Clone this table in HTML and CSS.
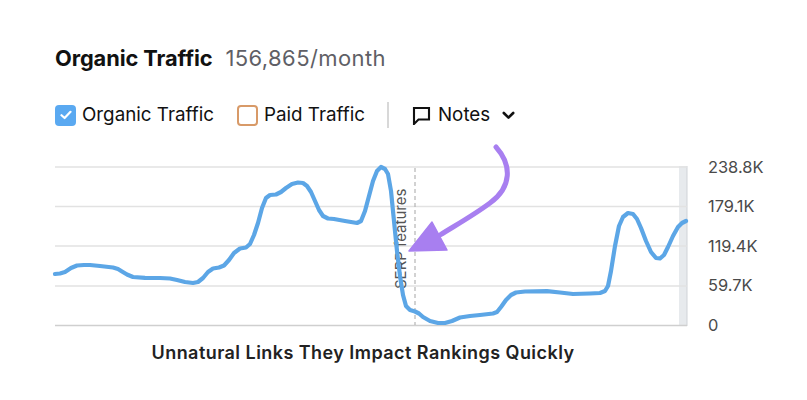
FILE: index.html
```html
<!DOCTYPE html>
<html>
<head>
<meta charset="utf-8">
<link rel="stylesheet" href="styles.css">
</head>
<body>
<div class="page">
  <div class="head">
    <span class="h-title">Organic Traffic</span>
    <span class="h-val">156,865/month</span>
  </div>
  <div class="legend">
    <span class="lg">
      <span class="cb cb-on"><svg width="12" height="10" viewBox="0 0 12 10"><path d="M1.5 5.2 L4.6 8 L10.5 1.8" fill="none" stroke="#fff" stroke-width="2.2" stroke-linecap="round" stroke-linejoin="round"/></svg></span>
      <span class="lg-text">Organic Traffic</span>
    </span>
    <span class="lg lg-paid">
      <span class="cb cb-off"></span>
      <span class="lg-text">Paid Traffic</span>
    </span>
    <span class="sep"></span>
    <span class="notes">
      <svg class="bubble" width="19" height="19" viewBox="0 0 19 19"><path d="M2 2 H17 V13.5 H6.5 L2 18 Z" fill="none" stroke="#111" stroke-width="2.1" stroke-linejoin="miter"/></svg>
      <span class="lg-text">Notes</span>
      <svg class="chev" width="13" height="9" viewBox="0 0 13 9"><path d="M1.8 2 L6.5 6.6 L11.2 2" fill="none" stroke="#111" stroke-width="2.6" stroke-linecap="round" stroke-linejoin="round"/></svg>
    </span>
  </div>
  <svg class="chart" width="807" height="195" viewBox="0 140 807 195">
    <rect x="679" y="165" width="8" height="160" fill="#e7eaed"/>
    <line x1="687" y1="165" x2="687" y2="325" stroke="#cfd3d7" stroke-width="1"/>
    <g stroke="#e2e2e2" stroke-width="1.3">
      <line x1="55" y1="166" x2="687" y2="166"/>
      <line x1="55" y1="205.5" x2="687" y2="205.5"/>
      <line x1="55" y1="245" x2="687" y2="245"/>
      <line x1="55" y1="285" x2="687" y2="285"/>
    </g>
    <line x1="55" y1="324.5" x2="687" y2="324.5" stroke="#cfcfcf" stroke-width="1.5"/>
    <line x1="415" y1="167" x2="415" y2="324" stroke="#b5b5b5" stroke-width="1.2" stroke-dasharray="4 3"/>
    <text class="serp" transform="translate(406,288) rotate(-90)">SERP features</text>
    <polyline fill="none" stroke="#5ca6e6" stroke-width="4.2" stroke-linejoin="round" stroke-linecap="round"
      points="55,273 60,272.5 65,271 71,267 77,264.5 84,264 90,264 100,265 113,266.5 118,268 122,270.5 127,273.5 133,276 145,276.8 160,277 170,277.5 177,279 185,281 193,282 198,281 203,277 208,271 213,267.5 219,266.5 224,264.5 229,259 234,252 240,247.5 246,246.5 250,243 254,234 258,222 262,207 266,197 270,194 276,193.5 281,191 286,187 292,183 298,181.5 303,182 307,185 311,191 315,200 319,209 323,215 328,217.5 334,218 345,220 357,222 361,220 365,210 369,195 373,180 377,170 381,166 385,168 388,173 391,190 394,220 397,250 400,275 403,294 406,305 410,309 415,310.5 419,312.5 423,316 430,320 438,322 445,322 452,320 460,316.5 470,315 480,314 493,312.5 497,311 501,306 506,299 511,294 516,291.5 525,290.5 547,290.2 560,291.5 573,293 590,292.5 600,292 605,290 608,285 611,270 615,245 619,225 623,216 628,212 633,213 637,218 641,227 646,240 651,251 656,257 660,257.5 664,254 668,246 673,235 678,226 682,222 686,220"/>
    <path d="M496 146 C512 164 512 186 490 202 C474 214 456 224 440 234" fill="none" stroke="#a87ff0" stroke-width="5" stroke-linecap="round"/>
    <polygon points="409,250 432,221 447,249" fill="#a87ff0" stroke="#a87ff0" stroke-width="1.5" stroke-linejoin="round"/>
    <g class="ylab">
      <text x="708" y="171.5">238.8K</text>
      <text x="708" y="211">179.1K</text>
      <text x="708" y="250.5">119.4K</text>
      <text x="708" y="290">59.7K</text>
      <text x="708" y="330">0</text>
    </g>
  </svg>
  <div class="caption">Unnatural Links They Impact Rankings Quickly</div>
</div>
</body>
</html>
```

FILE: styles.css
```css
html, body {
  margin: 0;
  padding: 0;
  background: #ffffff;
}
.page {
  width: 807px;
  height: 400px;
  padding-top: 46px;
  box-sizing: border-box;
  font-family: Inter, "Liberation Sans", sans-serif;
  color: #111;
}
.head {
  display: flex;
  align-items: baseline;
  gap: 13px;
  padding-left: 55px;
  height: 24px;
  line-height: 24px;
}
.h-title {
  font-size: 21.8px;
  font-weight: 700;
  color: #111;
  letter-spacing: -0.1px;
}
.h-val {
  font-size: 22px;
  font-weight: 400;
  color: #5f5f66;
  letter-spacing: 0.4px;
}
.legend {
  display: flex;
  align-items: center;
  padding-left: 55px;
  margin-top: 31px;
  height: 28px;
}
.lg {
  display: flex;
  align-items: center;
  gap: 6px;
}
.lg-text {
  font-size: 18.8px;
  line-height: 24px;
  color: #111;
}
.lg-paid {
  margin-left: 23px;
}
.cb {
  width: 21px;
  height: 21px;
  box-sizing: border-box;
  border-radius: 4px;
  display: flex;
  align-items: center;
  justify-content: center;
}
.cb-on {
  background: #5aa9f1;
}
.cb-off {
  border: 2px solid #d89a68;
  background: #fff;
}
.sep {
  width: 2px;
  height: 26px;
  background: #d8d8d8;
  margin-left: 22px;
}
.notes {
  display: flex;
  align-items: center;
  margin-left: 23px;
  gap: 7px;
}
.chev {
  margin-left: 5px;
}
.chart {
  display: block;
  margin-top: 12px;
}
.serp {
  font-family: Inter, "Liberation Sans", sans-serif;
  font-size: 15px;
  fill: #555;
}
.ylab text {
  font-family: Inter, "Liberation Sans", sans-serif;
  font-size: 16.4px;
  fill: #4a4a4a;
}
.caption {
  margin-top: 5px;
  text-align: center;
  width: 726px;
  font-family: Inter, "Liberation Sans", sans-serif;
  font-weight: 600;
  font-size: 18px;
  letter-spacing: 0.45px;
  line-height: 24px;
  color: #222;
}
```
